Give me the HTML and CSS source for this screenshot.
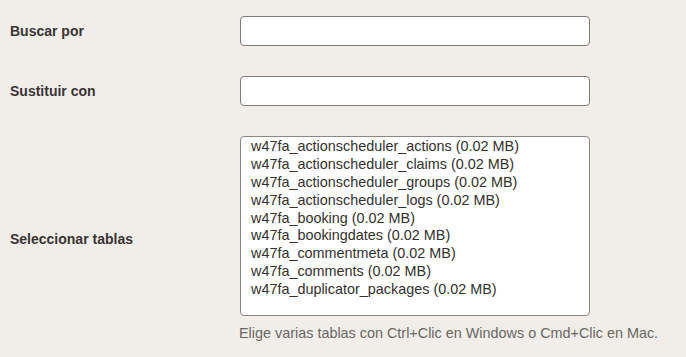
FILE: index.html
```html
<!DOCTYPE html>
<html lang="es">
<head>
<meta charset="utf-8">
<title>Buscar y sustituir</title>
<link rel="stylesheet" href="styles.css">
</head>
<body>
<form class="form-table">
  <label class="label" for="search">Buscar por</label>
  <div class="field"><input id="search" class="text-input" type="text"></div>

  <label class="label" for="replace">Sustituir con</label>
  <div class="field"><input id="replace" class="text-input" type="text"></div>

  <label class="label" for="tables">Seleccionar tablas</label>
  <div class="field">
    <select id="tables" class="tables" multiple size="10">
      <option>w47fa_actionscheduler_actions (0.02 MB)</option>
      <option>w47fa_actionscheduler_claims (0.02 MB)</option>
      <option>w47fa_actionscheduler_groups (0.02 MB)</option>
      <option>w47fa_actionscheduler_logs (0.02 MB)</option>
      <option>w47fa_booking (0.02 MB)</option>
      <option>w47fa_bookingdates (0.02 MB)</option>
      <option>w47fa_commentmeta (0.02 MB)</option>
      <option>w47fa_comments (0.02 MB)</option>
      <option>w47fa_duplicator_packages (0.02 MB)</option>
    </select>
    <p class="help">Elige varias tablas con Ctrl+Clic en Windows o Cmd+Clic en Mac.</p>
  </div>
</form>
</body>
</html>
```
FILE: styles.css
```css
html, body {
  margin: 0;
  padding: 0;
  background: #f1eeea;
}
body {
  font-family: "Liberation Sans", Arial, sans-serif;
  color: #3a3434;
}
.form-table {
  display: grid;
  grid-template-columns: 230px 350px;
  column-gap: 0;
  row-gap: 30px;
  align-items: center;
  padding: 16px 0 0 10px;
}
.label {
  font-size: 14px;
  font-weight: bold;
  color: #3a3434;
}
.field {
  display: flex;
  flex-direction: column;
}
.text-input {
  box-sizing: border-box;
  width: 350px;
  height: 30px;
  margin: 0;
  border: 1px solid #7f7c79;
  border-radius: 4px;
  background: #fff;
  font-family: inherit;
  font-size: 14px;
  padding: 0 8px;
}
.tables {
  box-sizing: border-box;
  width: 350px;
  height: 180px;
  margin: 0;
  padding: 1px 0 0 10px;
  border: 1px solid #8a8784;
  border-radius: 4px;
  background: #fff;
  font-family: inherit;
  font-size: 14.4px;
  color: #33302e;
  overflow: hidden;
}
.tables option {
  padding: 0;
  line-height: 17.9px;
  height: 17.9px;
}
.help {
  margin: 9px 0 0 -1px;
  font-size: 14.4px;
  white-space: nowrap;
  color: #6b6763;
}
```
